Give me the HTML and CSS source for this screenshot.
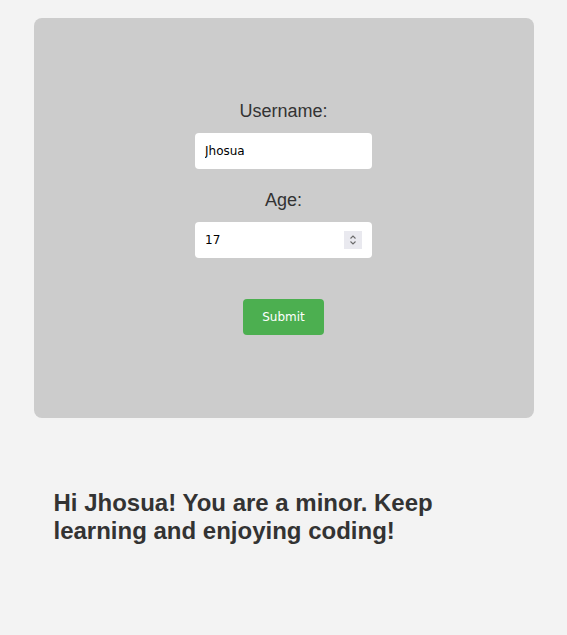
FILE: index.html
```html
<!DOCTYPE html>
<html>
<head>
<meta charset="utf-8">
<link rel="stylesheet" href="styles.css">
</head>
<body>
<div class="card">
  <form class="form">
    <label class="label" for="username">Username:</label>
    <input class="field" id="username" type="text" value="Jhosua">
    <label class="label" for="age">Age:</label>
    <div class="field-wrap">
      <input class="field field-age" id="age" type="number" value="17">
      <span class="spinner" aria-hidden="true">
        <svg width="18" height="18" viewBox="0 0 18 18">
          <path d="M6.5 7.5 L9 5 L11.5 7.5" fill="none" stroke="#6b6b6b" stroke-width="1.1"/>
          <path d="M6.5 10.5 L9 13 L11.5 10.5" fill="none" stroke="#6b6b6b" stroke-width="1.1"/>
        </svg>
      </span>
    </div>
    <button class="submit" type="button">Submit</button>
  </form>
</div>
<div class="result">
  <h2 class="message">Hi Jhosua! You are a minor. Keep learning and enjoying coding!</h2>
</div>
</body>
</html>
```
FILE: styles.css
```css
html, body {
  background: #f3f3f3;
}
body {
  margin: 8px;
  font-family: "Liberation Sans", Arial, sans-serif;
}
.card {
  width: 500px;
  height: 400px;
  margin: 10px auto 0;
  background: #cccccc;
  border-radius: 8px;
  display: flex;
  align-items: center;
  justify-content: center;
}
.form {
  display: flex;
  flex-direction: column;
  align-items: center;
}
.label {
  display: block;
  font-size: 18px;
  line-height: 21px;
  color: #333;
  margin-bottom: 11px;
}
.field {
  box-sizing: border-box;
  width: 177px;
  height: 36px;
  border: none;
  border-radius: 4px;
  background: #fff;
  padding: 0 10px;
  margin: 0 0 21px;
  color: #000;
  font-family: "DejaVu Sans", Verdana, sans-serif;
  font-size: 12px;
  display: block;
}
.field-wrap {
  position: relative;
  margin-bottom: 41px;
}
.field-age {
  margin: 0;
  -moz-appearance: textfield;
}
.field-age::-webkit-inner-spin-button,
.field-age::-webkit-outer-spin-button {
  -webkit-appearance: none;
  margin: 0;
}
.spinner {
  position: absolute;
  right: 10px;
  top: 9px;
  width: 18px;
  height: 18px;
  background: #e9e9ef;
  display: block;
}
.spinner svg {
  display: block;
}
.submit {
  box-sizing: border-box;
  width: 81px;
  height: 36px;
  background: #4caf50;
  color: #fff;
  border: none;
  border-radius: 4px;
  padding: 0;
  font-family: "DejaVu Sans", Verdana, sans-serif;
  font-size: 12px;
}
.result {
  width: 500px;
  margin: 0 auto;
  padding: 71px 20px 0;
  box-sizing: border-box;
}
.message {
  margin: 0;
  font-size: 24px;
  line-height: 28px;
  font-weight: bold;
  color: #333;
}
```
